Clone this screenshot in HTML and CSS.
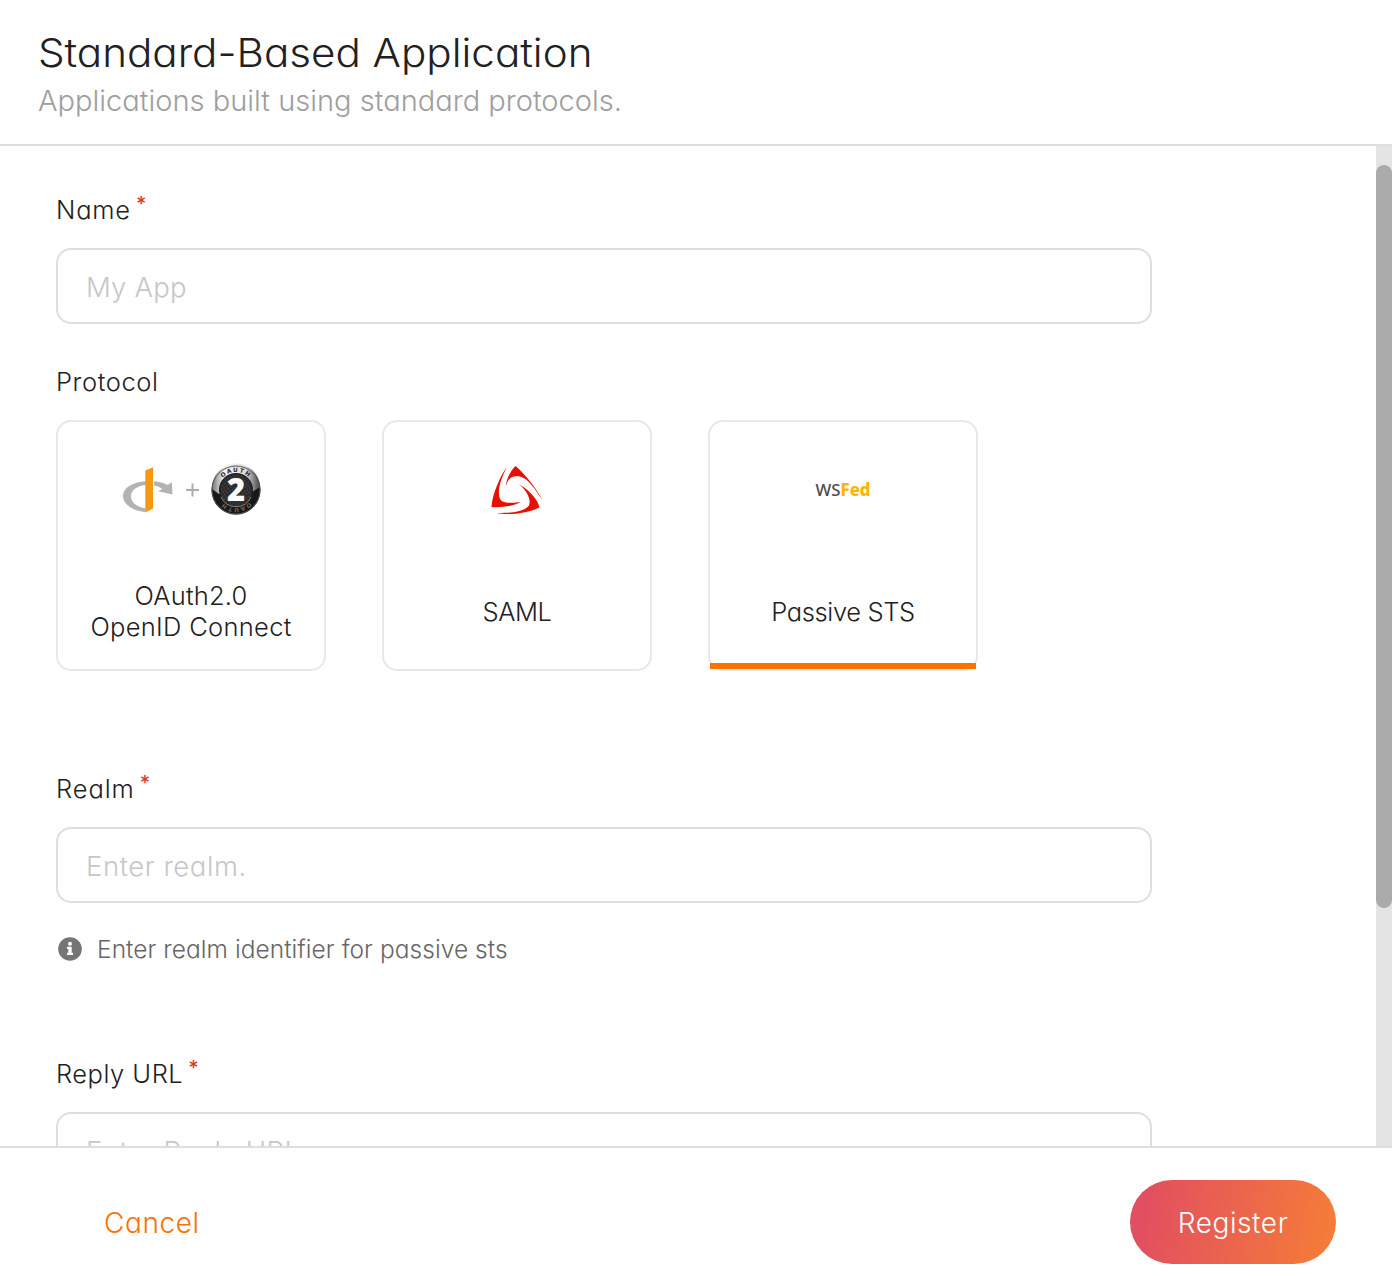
FILE: index.html
```html
<!DOCTYPE html>
<html lang="en">
<head>
<meta charset="utf-8">
<title>Standard-Based Application</title>
<link rel="stylesheet" href="styles.css">
</head>
<body>
<div class="modal">
  <header class="modal-header">
    <h1 class="title">Standard-Based Application</h1>
    <p class="subtitle">Applications built using standard protocols.</p>
  </header>
  <main class="modal-body">
    <form class="form">
      <section class="field">
        <div class="label"><span class="t-name">Name</span><span class="required">*</span></div>
        <div class="input"><span class="t-app">My App</span></div>
      </section>
      <section class="field field-protocol">
        <div class="label"><span class="t-protocol">Protocol</span></div>
        <div class="cards">
          <div class="card">
            <div class="card-logo">
              <svg width="140" height="56" viewBox="1 0 140 56">
                <path d="M26 20.300C12 21.200 3 27 3 35C3 43 12.500 50 25.500 51V47.300C16.500 45.800 11 41.300 11 35.200C11 29.300 16.500 25 26 24Z" fill="#b3b3b3"/>
                <path d="M34 20.300C39.500 20.700 43.700 22 47.500 23.900L51.800 21.300L52.500 33.500L38 30.300L42.300 27.900C39.800 26.300 37 25 34 24.500Z" fill="#b3b3b3"/>
                <path d="M25.300 9.500L33 6.300V47.500L25.300 51.500Z" fill="#f59811"/>
                <path d="M72.500 22.500V35.500M66 29H79" stroke="#acacac" stroke-width="2" fill="none"/>
                <defs>
                  <linearGradient id="rim" x1="0" y1="0" x2="1" y2="0">
                    <stop offset="0" stop-color="#777"/><stop offset=".25" stop-color="#f4f4f4"/><stop offset=".7" stop-color="#ddd"/><stop offset="1" stop-color="#444"/>
                  </linearGradient>
                  <pattern id="weave" width="3" height="3" patternUnits="userSpaceOnUse" patternTransform="rotate(-35)">
                    <rect width="3" height="3" fill="#282828"/><rect width="1.500" height="1.500" fill="#4b4b4b"/>
                  </pattern>
                  <path id="arcTop" d="M98 29A18 18 0 0 1 134 29"/>
                  <path id="arcBottom" d="M134 29A18 18 0 0 1 98 29"/>
                </defs>
                <circle cx="116" cy="29" r="24.500" fill="#181818"/>
                <path d="M92 27A24 24 0 0 1 140 26L129 33H99L92 28Z" fill="url(#rim)"/>
                <circle cx="116" cy="29" r="24" fill="none" stroke="#555" stroke-width="1"/>
                <circle cx="116" cy="29" r="16.300" fill="url(#weave)" stroke="#222" stroke-width="1.500"/>
                <path d="M101 36A16.500 16.500 0 0 0 131 36" fill="none" stroke="#888" stroke-width="1"/>
                <text class="badge-ring" fill="#222"><textPath href="#arcTop" startOffset="50%" text-anchor="middle">OAUTH</textPath></text>
                <text class="badge-ring" fill="#666"><textPath href="#arcBottom" startOffset="50%" text-anchor="middle">OAUTH</textPath></text>
                <text class="badge-num" x="116" y="40" text-anchor="middle" fill="#fff">2</text>
              </svg>
            </div>
            <div class="card-text card-text-double"><span class="t-oauth">OAuth2.0</span><span class="t-openid">OpenID Connect</span></div>
          </div>
          <div class="card">
            <div class="card-logo">
              <svg width="56" height="56" viewBox="1 0 56 56" fill="#e61000">
                <path d="M27.500 5C34 10.500 45 22 54.800 39.500C47 28.500 40.500 17.500 32 15.500C23.500 14 20 17.500 18.200 25C17.500 20 22.500 9.500 27.500 5Z"/>
                <path d="M19 6C11.500 20 9.500 31 11.800 37.500C14 42.500 22 42.500 32.500 41C26.500 45 13 47 3.500 46C4 34 12 15 19 6Z"/>
                <path d="M31.500 23.500C42.500 30 50 39 51.500 46.500C38 53 20 54.200 8.500 52C22 52.500 37 50.500 41 44.500C43.500 38.500 38.500 29.500 31.500 23.500Z"/>
              </svg>
            </div>
            <div class="card-text"><span class="t-saml">SAML</span></div>
          </div>
          <div class="card card-selected">
            <div class="card-logo wsfed"><span>WS</span><b class="fed">Fed</b></div>
            <div class="card-text"><span class="t-sts">Passive STS</span></div>
          </div>
        </div>
      </section>
      <section class="field field-realm">
        <div class="label"><span class="t-realm">Realm</span><span class="required">*</span></div>
        <div class="input"><span class="t-enter">Enter realm.</span></div>
        <div class="hint">
          <svg width="24" height="24" viewBox="0 0 24 24"><circle cx="12" cy="12" r="11.800" fill="#757575"/><circle cx="12" cy="6.800" r="2" fill="#fff"/><path d="M9 9.800H13.700V15.700H15V18H9V15.700H10.300V12H9Z" fill="#fff"/></svg>
          <span>Enter realm identifier for passive sts</span>
        </div>
      </section>
      <section class="field">
        <div class="label"><span class="t-reply">Reply URL</span><span class="required">*</span></div>
        <div class="input"><span class="t-enter">Enter Reply URL</span></div>
      </section>
    </form>
    <div class="scrollbar"><div class="thumb"></div></div>
  </main>
  <footer class="modal-footer">
    <div class="cancel">Cancel</div>
    <div class="register">Register</div>
  </footer>
</div>
</body>
</html>
```
FILE: styles.css
```css
* { box-sizing: border-box; }
body {
  margin: 0;
  background: #fff;
  color: #212121;
  font-family: Inter, "Liberation Sans", sans-serif;
  font-feature-settings: "cv11" 1;
  font-weight: 320;
}
.modal { height: 1276px; display: flex; flex-direction: column; overflow: hidden; }
.modal-header { height: 146px; flex: none; padding: 28px 38px 0; border-bottom: 2px solid #dedede; }
.title { margin: 0; font-size: 39px; font-weight: 320; line-height: 49px; white-space: nowrap; transform: scaleX(1.08); transform-origin: left; }
.subtitle { margin: 8px 0 0; font-size: 28px; line-height: 32px; color: #9e9e9e; white-space: nowrap; transform: scaleX(1.037); transform-origin: left; }
.title, .subtitle { width: max-content; }
.modal-body { height: 1000px; flex: none; display: flex; justify-content: space-between; overflow: hidden; }
.form { width: 1152px; padding: 48px 0 0 56px; }
.scrollbar { width: 16px; height: 1000px; padding-top: 19px; background: #e4e4e4; }
.thumb { height: 743px; border-radius: 10px; background: #ababab; }
.field { margin-bottom: 42px; }
.field-protocol { margin-bottom: 102px; }
.field-realm { margin-bottom: 93px; }
.label { display: flex; height: 32px; margin-bottom: 22px; font-size: 25.500px; line-height: 32px; white-space: nowrap; }
.required { margin-left: 5px; font-size: 20px; line-height: 20px; font-weight: 500; color: #e0382c; }
.input { height: 76px; padding: 0 28px; border: 2px solid #dedede; border-radius: 15px; font-size: 27.500px; line-height: 74px; color: #c7c7c7; white-space: nowrap; }
.t-name { letter-spacing: 0.8px; }
.t-protocol { letter-spacing: 0.6px; }
.t-realm { letter-spacing: 0.9px; }
.t-reply { letter-spacing: 0.5px; }
.t-app { letter-spacing: 0.2px; }
.t-enter { letter-spacing: 0.55px; }
.t-oauth { letter-spacing: 0.2px; }
.t-openid { letter-spacing: 0.3px; }
.t-saml, .t-sts { letter-spacing: -0.35px; }
.cards { display: flex; gap: 56px; }
.card { width: 270px; height: 251px; display: flex; flex-direction: column; border: 2px solid #e8e8e8; border-radius: 15px; }
.card-selected { position: relative; }
.card-selected::after { content: ""; position: absolute; left: 0; right: 0; bottom: 0; height: 6px; background: #fa7300; }
.card-logo { height: 138px; flex: none; display: flex; align-items: center; justify-content: center; }
.card-logo svg { margin-top: -4px; }
.card-text { height: 104px; padding-bottom: 2px; display: grid; place-content: center; text-align: center; font-size: 25.500px; line-height: 31px; white-space: nowrap; }
.card-text-double { padding-bottom: 3px; }
.wsfed { padding-bottom: 3px; font-family: "Noto Sans", sans-serif; font-size: 16.800px; font-weight: 500; color: #4d4d4d; }
.fed { font-weight: 800; color: #ffb400; }
.badge-ring { font: 900 5.800px "DejaVu Sans", sans-serif; letter-spacing: 1.500px; }
.badge-num { font: 800 31px "Open Sans", sans-serif; }
.hint { display: flex; align-items: center; gap: 15px; height: 32px; margin-top: 30px; padding-left: 2px; font-size: 24.500px; letter-spacing: 0.05px; color: #666; white-space: nowrap; }
.modal-footer { height: 130px; flex: none; display: flex; justify-content: space-between; align-items: flex-start; padding: 32px 56px 0 104px; border-top: 2px solid #dedede; font-size: 28px; line-height: 87px; letter-spacing: 0.6px; }
.cancel { color: #fa7300; }
.register { width: 206px; height: 84px; border-radius: 42px; background: linear-gradient(100deg, #e24f60 8%, #f47b39 94%); color: #fff; text-align: center; }
```
